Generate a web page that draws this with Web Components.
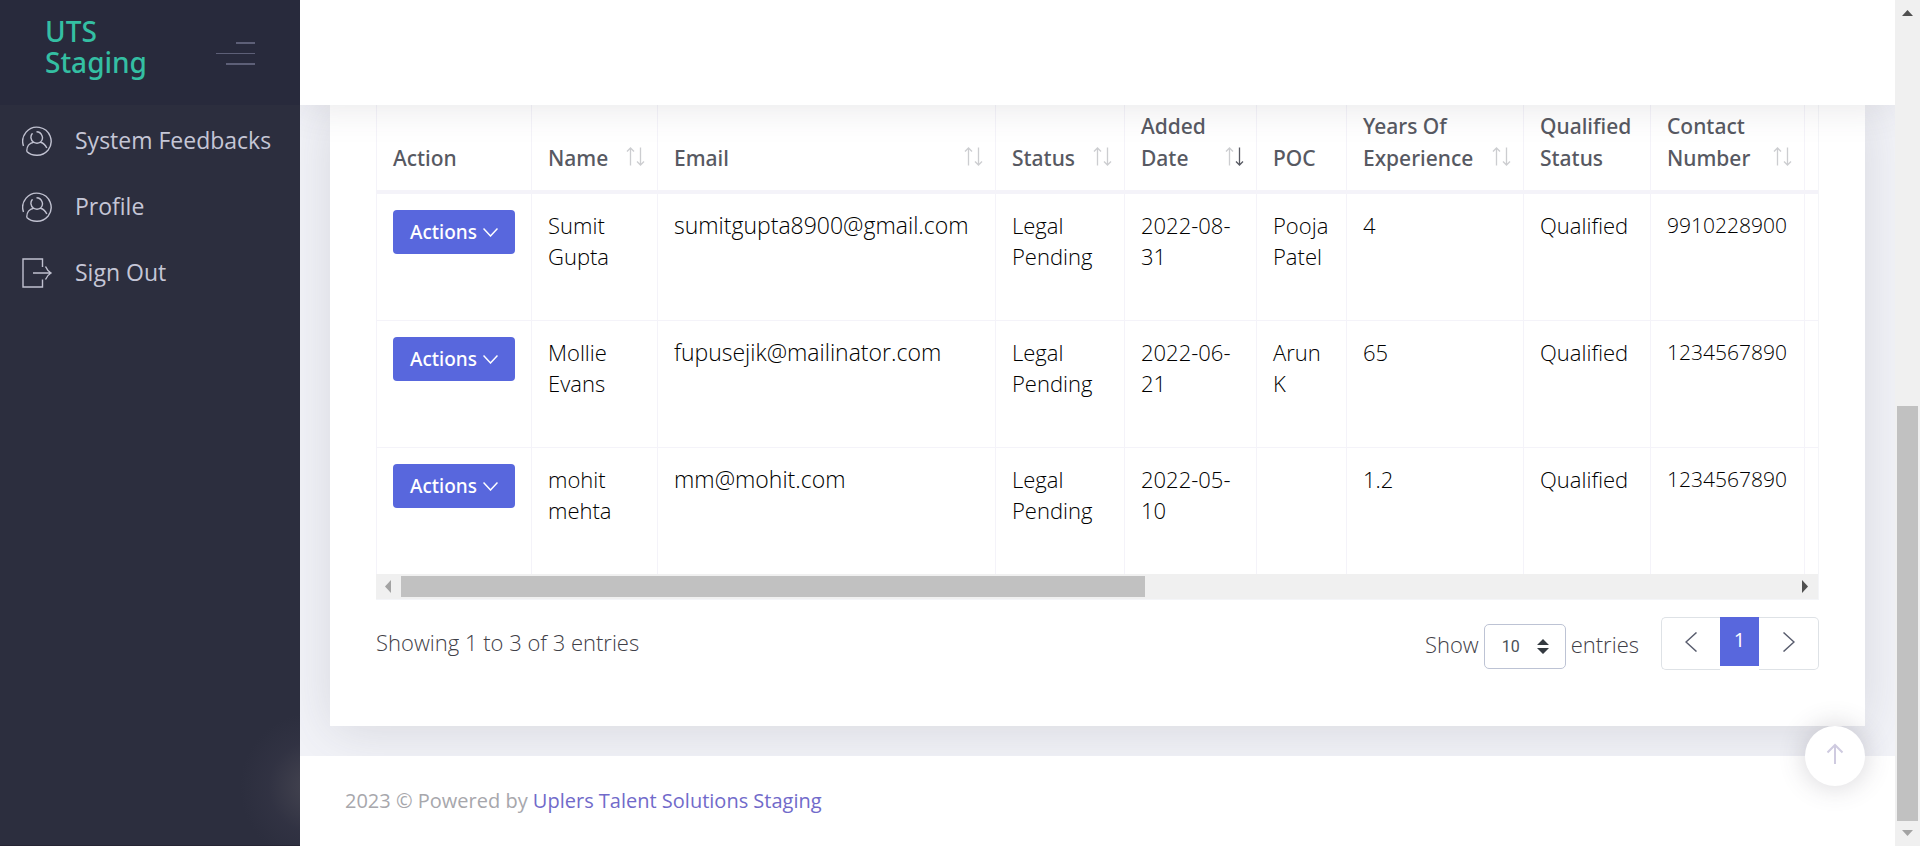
<!DOCTYPE html>
<html lang="en">
<head>
<meta charset="utf-8">
<title>UTS Staging</title>
<style>
  html, body { margin: 0; }
  body { font-family: "Open Sans", "Noto Sans", sans-serif; background: #f2f3f8; color: #575962; }
</style>
</head>
<body>
<uts-app>
  <uts-sidebar slot="sidebar">
    <uts-nav-item icon="user">System Feedbacks</uts-nav-item>
    <uts-nav-item icon="user">Profile</uts-nav-item>
    <uts-nav-item icon="exit">Sign Out</uts-nav-item>
  </uts-sidebar>
  <uts-card>
    <uts-talent-table></uts-talent-table>
    <uts-table-footer></uts-table-footer>
  </uts-card>
  <uts-footer slot="footer"></uts-footer>
  <uts-page-scroll slot="scroll"></uts-page-scroll>
</uts-app>

<script>
const define = (name, html, setup) => {
  const template = document.createElement('template');
  template.innerHTML = html;
  customElements.define(name, class extends HTMLElement {
    constructor() {
      super();
      this.attachShadow({ mode: 'open' }).append(template.content.cloneNode(true));
    }
    connectedCallback() { if (setup) setup(this, this.shadowRoot); }
  });
};

define('uts-app', `
<style>
  :host { display: grid; grid-template-columns: 300px minmax(0, 1fr) 25px; min-height: 100vh; }
  .page { display: flex; flex-direction: column; position: relative; }
  header { height: 105px; background: #fff; box-shadow: 0 0 40px rgba(69,65,78,.14); position: relative; z-index: 2; clip-path: inset(0 0 -60px 0); }
  main { flex: 1; padding: 0 30px 30px; overflow: hidden; }
  .top { position: absolute; right: 30px; bottom: 60px; width: 60px; height: 60px; padding: 0 0 4px; border: 0; border-radius: 50%;
    background: #fff; box-shadow: 0 0 26px 2px rgba(69,65,78,.2); display: grid; place-items: center; z-index: 3; }
  .top svg { width: 18px; height: 22px; fill: none; stroke: #cfcbe0; stroke-width: 2; }
</style>
<slot name="sidebar"></slot>
<div class="page">
  <header></header>
  <main><slot></slot></main>
  <slot name="footer"></slot>
  <button class="top" aria-label="Scroll to top"><svg viewBox="0 0 18 22"><path d="M9 21V2M1.500 9.500L9 2l7.500 7.500"/></svg></button>
</div>
<slot name="scroll"></slot>`);

define('uts-sidebar', `
<style>
  :host { display: block; box-sizing: border-box; border-bottom: 1px solid #262534;
    background: radial-gradient(circle 75px at 315px calc(100% - 58px), #41414e 15%, rgba(58,58,75,.35) 62%, rgba(44,46,62,0) 100%), #2c2e3e; }
  .brand { display: flex; justify-content: space-between; align-items: flex-start; box-sizing: border-box; height: 105px; padding: 16px 45px 0; background: #282a3c; }
  .brand a { width: 110px; font: 500 28px/31px "Noto Sans", sans-serif; color: #34bfa3; text-decoration: none; }
  button { display: flex; flex-direction: column; align-items: flex-end; gap: 9px; margin: 26px 0 0; padding: 0; border: 0; background: none; }
  i { display: block; height: 2px; background: #5d5f77; width: 19px; }
  i:nth-child(2) { width: 39px; height: 1px; }
  i:nth-child(3) { width: 29px; }
  nav { display: block; padding-top: 3px; }
</style>
<div class="brand"><a href="#">UTS Staging</a><button aria-label="Toggle menu"><i></i><i></i><i></i></button></div>
<nav><slot></slot></nav>`);

const icons = {
  user: '<path d="M1.500 20.500A14 14 0 1 1 5 25Q5 17 11 16.500M4.500 23.500C7 30 22 31.500 26 23M19 16.500Q22 18 24.500 22M11 16.500A6 6 0 0 1 10 7.500M14 6A6 6 0 1 1 11 16.500Q15 19 19 16.500"/>',
  exit: '<path d="M20.500 9V1H1v28h19.500v-7.500M11 15h18M23.500 8.500Q25.500 13 29 15Q25.500 17 23.500 21.500"/>'
};
icons.user = '<path d="M1.500 20A14.200 14.200 0 1 1 26 24.200M4.800 25.500C10 30.500 20 31 26 24.200M4.800 25.500C4.500 20.500 7.500 17 11.500 16.200M18.500 16.200C21.500 17 23.500 19 24.800 22M10.500 7.200A6 6 0 0 0 11.500 16.200Q15 18.200 18.500 16.200A6 6 0 0 0 14.500 5.800"/>';

define('uts-nav-item', `
<style>
  :host { display: block; }
  a { display: flex; align-items: center; gap: 23px; height: 66px; padding-left: 22px; color: #c5c6d6; text-decoration: none; font-size: 23px; line-height: 30px; white-space: nowrap; }
  span { padding-bottom: 2px; }
  svg { width: 30px; height: 30px; flex: none; fill: none; stroke: #c0c1d0; stroke-width: 1.4; }
</style>
<a href="#"><svg viewBox="0 0 30 30"></svg><span><slot></slot></span></a>`,
(host, root) => { root.querySelector('svg').innerHTML = icons[host.getAttribute('icon')]; });

define('uts-card', `
<style>
  :host { display: block; background: #fff; padding: 0 46px 56px; box-shadow: 0 5px 50px rgba(69,65,78,.15); }
</style>
<slot></slot>`);

define('uts-sort', `
<style>
  :host { display: block; flex: none; height: 27px; }
  svg { display: block; width: 19px; height: 19px; fill: none; stroke: #575962; stroke-width: 1.300; }
  path { opacity: .3; }
  :host([dir=desc]) .down { opacity: 1; }
</style>
<svg viewBox="0 0 19 19"><path d="M4.500 18.500V1M1 4.500L4.500 1L8 4.500"/><path class="down" d="M14.500 .5V18M11 14.500L14.500 18L18 14.500"/></svg>`);

define('uts-action', `
<style>
  :host { display: block; }
  button { display: flex; align-items: center; justify-content: center; gap: 6px; box-sizing: border-box; width: 122px; height: 44px; padding: 0; border: 0; border-radius: 4px;
    background: #5867dd; color: #fff; font: 500 19px/30px "Noto Sans", sans-serif; }
  svg { width: 15px; height: 9px; fill: none; stroke: #fff; stroke-width: 1.500; }
</style>
<button>Actions<svg viewBox="0 0 15 9"><path d="M.5 .5L7.500 8L14.500 .5"/></svg></button>`);

const columns = [
  ['Action', 155], ['Name', 126, 'both'], ['Email', 338, 'both'], ['Status', 129, 'both'],
  ['Added Date', 132, 'desc'], ['POC', 90], ['Years Of Experience', 177, 'both'],
  ['Qualified Status', 127], ['Contact Number', 154, 'both'], ['', 1250]
];
const rows = [
  ['Sumit Gupta', 'sumitgupta8900@gmail.com', 'Legal Pending', '2022-08-31', 'Pooja Patel', '4', 'Qualified', '9910228900', ''],
  ['Mollie Evans', 'fupusejik@mailinator.com', 'Legal Pending', '2022-06-21', 'Arun K', '65', 'Qualified', '1234567890', ''],
  ['mohit mehta', 'mm@mohit.com', 'Legal Pending', '2022-05-10', '', '1.2', 'Qualified', '1234567890', '']
];
define('uts-talent-table', `
<style>
  :host { display: block; border: 1px solid #f4f5f8; border-width: 0 1px 1px 0; }
  .view { overflow: hidden; }
  table { table-layout: fixed; border-collapse: separate; border-spacing: 0; width: 2678px; }
  th, td { box-sizing: border-box; border-left: 1px solid #f4f3f9; text-align: left; }
  th { height: 89px; padding: 0 12px 16px 16px; border-bottom: 4px solid #f4f3f9; vertical-align: bottom; font: 500 21px/32px "Noto Sans", sans-serif; color: #575962; }
  th div { display: flex; justify-content: space-between; align-items: flex-end; }
  th.plain { padding-right: 8px; }
  td { height: 127px; padding: 16px 12px 0 16px; vertical-align: top; font-size: 22px; line-height: 31px; font-weight: 300; color: #000; border-bottom: 1px solid #f4f3f9; }
  td:nth-child(3) { font-size: 23px; }
  td:nth-child(9) { font-size: 21px; }
  tbody tr:last-child td { height: 126px; border-bottom: 0; }
  .bar { display: flex; align-items: center; height: 25px; background: #f0f0f0; }
  .bar svg { width: 25px; height: 13px; flex: none; }
  .thumb { flex: 743; height: 21px; background: #c1c1c1; }
  .rest { flex: 648; }
</style>
<div class="view"><table><colgroup></colgroup><thead><tr></tr></thead><tbody></tbody></table></div>
<div class="bar"><svg viewBox="0 0 25 13"><path d="M15 0v13L9 6.500z" fill="#a3a3a3"/></svg><div class="thumb"></div><div class="rest"></div><svg viewBox="0 0 25 13"><path d="M9 0v13l6-6.500z" fill="#505050"/></svg></div>`,
(host, root) => {
  root.querySelector('colgroup').innerHTML = columns.map(c => `<col style="width:${c[1]}px">`).join('');
  root.querySelector('thead tr').innerHTML = columns.map(([label, , sort]) =>
    `<th class="${sort ? '' : 'plain'}"><div><span>${label}</span>${sort ? `<uts-sort dir="${sort}"></uts-sort>` : ''}</div></th>`).join('');
  root.querySelector('tbody').innerHTML = rows.map(r =>
    `<tr><td><uts-action></uts-action></td>${r.map(v => `<td>${v}</td>`).join('')}</tr>`).join('');
});

define('uts-table-footer', `
<style>
  :host { display: flex; align-items: flex-start; justify-content: space-between; padding-top: 17px; font-size: 22px; line-height: 31px; font-weight: 300; color: #3f4047; }
  p { margin: 10px 0 0; }
  .tools { display: flex; }
  label { display: flex; align-items: flex-start; gap: 5px; height: 45px; margin: 7px 22px 0 0; line-height: 40px; }
  .pick { position: relative; display: flex; }
  select { appearance: none; box-sizing: border-box; width: 82px; height: 45px; padding: 0 0 0 17px; border: 1px solid #bdc3d4; border-radius: 5px; background: #fff; color: #495057; font: 400 16px/24px Roboto, sans-serif; }
  .pick svg { position: absolute; right: 17px; top: 15px; width: 12px; height: 15px; fill: #343a40; }
  .pager { display: flex; align-items: flex-start; }
  .pager button { box-sizing: border-box; height: 53px; width: 60px; padding: 0 0 3px; display: grid; place-items: center; border: 1px solid #dee2e6; background: #fff; }
  .pager .prev { border-right: 0; border-radius: 5px 0 0 5px; width: 59px; }
  .pager .next { border-left: 0; border-radius: 0 5px 5px 0; }
  .pager .page { width: 39px; height: 49px; border: 0; background: #5867dd; color: #fff; font: 400 20px/30px "Open Sans", sans-serif; }
  .pager svg { width: 12px; height: 20px; fill: none; stroke: #595d6e; stroke-width: 1.500; }
</style>
<p>Showing 1 to 3 of 3 entries</p>
<div class="tools">
  <label>Show <span class="pick"><select><option>10</option></select><svg viewBox="0 0 12 15"><path d="M6 0l6 6H0zM6 15l6-6H0z"/></svg></span> entries</label>
  <div class="pager">
    <button class="prev" aria-label="Previous"><svg viewBox="0 0 12 20"><path d="M11.500 .5L1 10l10.500 9.500"/></svg></button>
    <button class="page">1</button>
    <button class="next" aria-label="Next"><svg viewBox="0 0 12 20"><path d="M.5 .5L11 10L.5 19.500"/></svg></button>
  </div>
</div>`);

define('uts-footer', `
<style>
  :host { display: block; box-sizing: border-box; height: 90px; padding: 30px 45px; background: #fff; font-size: 20px; line-height: 30px; color: #a7a7ac; position: relative; }
  a { color: #716aca; text-decoration: none; }
</style>
2023 © Powered by <a href="#">Uplers Talent Solutions Staging</a>`);

define('uts-page-scroll', `
<style>
  :host { display: flex; flex-direction: column; align-items: center; background: #f0f0f0; }
  svg { width: 13px; height: 25px; flex: none; }
  .gap { flex: 381; }
  .thumb { flex: 415; width: 21px; background: #c1c1c1; }
</style>
<svg viewBox="0 0 13 25"><path d="M1 16h11L6.500 10z" fill="#505050"/></svg>
<div class="gap"></div><div class="thumb"></div>
<svg viewBox="0 0 13 25"><path d="M1 9h11L6.500 15z" fill="#a3a3a3"/></svg>`);
</script>
</body>
</html>
